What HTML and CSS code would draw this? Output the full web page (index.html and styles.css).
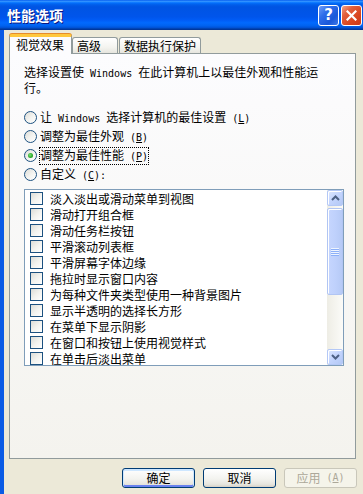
FILE: index.html
```html
<!DOCTYPE html>
<html lang="zh-CN">
<head>
<meta charset="utf-8">
<title>性能选项</title>
<link rel="stylesheet" href="styles.css">
</head>
<body>
<div class="window">
  <div class="titlebar">
    <span class="title">性能选项</span>
    <div class="caption-buttons">
      <span class="cap-btn help">?</span>
      <span class="cap-btn close">
        <svg width="11" height="11" viewBox="0 0 11 11"><path d="M1.5 1.5 L9.5 9.5 M9.5 1.5 L1.5 9.5" stroke="#fff" stroke-width="2.2" stroke-linecap="square"/></svg>
      </span>
    </div>
  </div>
  <div class="client">
    <div class="tabs">
      <div class="tab active">视觉效果</div>
      <div class="tab">高级</div>
      <div class="tab">数据执行保护</div>
    </div>
    <div class="panel">
      <p class="desc">选择设置使<span class="en"> Windows </span>在此计算机上以最佳外观和性能运行。</p>
      <div class="radios">
        <div class="radio-row"><span class="radio"></span><span class="label">让<span class="en"> Windows </span>选择计算机的最佳设置<span class="en"> (<u>L</u>)</span></span></div>
        <div class="radio-row"><span class="radio"></span><span class="label">调整为最佳外观<span class="en"> (<u>B</u>)</span></span></div>
        <div class="radio-row"><span class="radio checked"></span><span class="label focus">调整为最佳性能<span class="en"> (<u>P</u>)</span></span></div>
        <div class="radio-row"><span class="radio"></span><span class="label">自定义<span class="en"> (<u>C</u>):</span></span></div>
      </div>
      <div class="listbox">
        <ul class="items">
          <li><span class="check"></span>淡入淡出或滑动菜单到视图</li>
          <li><span class="check"></span>滑动打开组合框</li>
          <li><span class="check"></span>滑动任务栏按钮</li>
          <li><span class="check"></span>平滑滚动列表框</li>
          <li><span class="check"></span>平滑屏幕字体边缘</li>
          <li><span class="check"></span>拖拉时显示窗口内容</li>
          <li><span class="check"></span>为每种文件夹类型使用一种背景图片</li>
          <li><span class="check"></span>显示半透明的选择长方形</li>
          <li><span class="check"></span>在菜单下显示阴影</li>
          <li><span class="check"></span>在窗口和按钮上使用视觉样式</li>
          <li><span class="check"></span>在单击后淡出菜单</li>
        </ul>
        <div class="scrollbar">
          <span class="sb-btn">
            <svg width="9" height="6" viewBox="0 0 9 6"><path d="M1 5 L4.5 1.5 L8 5" fill="none" stroke="#4D6185" stroke-width="2"/></svg>
          </span>
          <span class="sb-thumb"><span class="grip"></span></span>
          <span class="sb-track"></span>
          <span class="sb-btn">
            <svg width="9" height="6" viewBox="0 0 9 6"><path d="M1 1 L4.5 4.5 L8 1" fill="none" stroke="#4D6185" stroke-width="2"/></svg>
          </span>
        </div>
      </div>
    </div>
    <div class="buttons">
      <span class="btn default">确定</span>
      <span class="btn">取消</span>
      <span class="btn disabled">应用<span class="en"> (<u>A</u>)</span></span>
    </div>
  </div>
</div>
</body>
</html>
```
FILE: styles.css
```css
html, body {
  margin: 0;
  padding: 0;
}
body {
  width: 363px;
  height: 494px;
  overflow: hidden;
  background: #ECE9D8;
  font-family: "Noto Sans CJK SC", "Noto Sans", sans-serif;
  font-size: 12px;
  color: #000;
}
.en {
  font-family: "DejaVu Sans Mono", "Liberation Mono", monospace;
  font-size: 10px;
  white-space: pre;
}
.window {
  width: 367px;
  height: 494px;
  display: flex;
  flex-direction: column;
}
.titlebar {
  flex: none;
  height: 30px;
  box-sizing: border-box;
  display: flex;
  align-items: center;
  padding: 0 5px 0 7px;
  background: linear-gradient(to bottom, #0058EE 0%, #3593FF 4%, #288EFF 6%, #127DFF 8%, #036FFC 10%, #0262EE 14%, #0057E5 20%, #0054E3 24%, #0055EB 56%, #005BF5 66%, #026AFE 76%, #0062EF 86%, #0052D6 92%, #0040AB 96%, #003092 100%);
}
.title {
  flex: 1;
  color: #fff;
  font-weight: bold;
  font-size: 14px;
  line-height: 16px;
  text-shadow: 1px 1px 0 #0A1883;
}
.caption-buttons {
  display: flex;
  gap: 2px;
}
.cap-btn {
  width: 21px;
  height: 21px;
  box-sizing: border-box;
  border: 1px solid #fff;
  border-radius: 3px;
  display: flex;
  align-items: center;
  justify-content: center;
}
.help {
  background: linear-gradient(135deg, #6F9DF7 0%, #2E6DEA 35%, #1A58D9 70%, #3E79E8 100%);
  color: #fff;
  font-family: "DejaVu Sans", sans-serif;
  font-weight: bold;
  font-size: 15px;
  line-height: 1;
}
.close {
  background: linear-gradient(135deg, #F1A38A 0%, #E2603D 30%, #D9461F 65%, #C9381A 100%);
}
.client {
  flex: 1;
  border-left: 4px solid #0A5BE5;
  padding-left: 5px;
  display: flex;
  flex-direction: column;
}
.tabs {
  display: flex;
  align-items: flex-end;
  height: 20px;
  margin-top: 4px;
  margin-bottom: -1px;
  position: relative;
  z-index: 1;
}
.tab {
  box-sizing: border-box;
  height: 16px;
  min-width: 46px;
  margin-bottom: 1px;
  padding: 1px 4px 0;
  line-height: 14px;
  border: 1px solid #919B9C;
  border-bottom: none;
  border-radius: 3px 3px 0 0;
  background: linear-gradient(#FFFFFF, #F4F4F0 60%, #E6E5DE);
  white-space: nowrap;
}
.tab + .tab {
  margin-left: 1px;
}
.tab.active {
  height: 20px;
  margin-bottom: 0;
  padding: 1px 7px 0 6px;
  border-top: 3px solid #FFC83C;
  box-shadow: 0 -1px 0 #E68B2C;
  background: #FCFCFE;
}
.tab.active + .tab {
  margin-left: 0;
}
.panel {
  box-sizing: border-box;
  width: 347px;
  height: 406px;
  border: 1px solid #919B9C;
  background: linear-gradient(#FCFCFE, #F4F3EE);
  padding: 11px 14px 0;
  display: flex;
  flex-direction: column;
}
.desc {
  margin: 0;
  width: 300px;
  line-height: 14px;
}
.radios {
  margin-top: 13px;
  display: flex;
  flex-direction: column;
}
.radio-row {
  height: 19px;
  display: flex;
  align-items: center;
  gap: 3px;
}
.radio {
  box-sizing: border-box;
  width: 13px;
  height: 13px;
  border: 1px solid #1C5180;
  border-radius: 50%;
  background: linear-gradient(135deg, #DCDCD7 0%, #F4F4F1 55%, #FFFFFF 100%);
  display: flex;
  align-items: center;
  justify-content: center;
}
.radio.checked::after {
  content: "";
  width: 5px;
  height: 5px;
  border-radius: 50%;
  background: radial-gradient(circle at 40% 40%, #7CE37A 0%, #2DAA2B 55%, #1A8A1A 100%);
}
.label {
  line-height: 14px;
  white-space: nowrap;
}
.label.focus {
  outline: 1px dotted #000;
  outline-offset: 0;
}
.listbox {
  margin-top: 5px;
  box-sizing: border-box;
  width: 320px;
  height: 177px;
  border: 1px solid #7F9DB9;
  background: #fff;
  display: flex;
}
.items {
  flex: 1;
  margin: 0;
  padding: 0 0 0 5px;
  list-style: none;
  overflow: hidden;
}
.items li {
  height: 16px;
  display: flex;
  align-items: center;
  gap: 7px;
  white-space: nowrap;
}
.check {
  flex: none;
  box-sizing: border-box;
  width: 13px;
  height: 13px;
  border: 1px solid #1C5180;
  background: linear-gradient(135deg, #DCDCD7 0%, #F2F2EE 50%, #FFFFFF 100%);
}
.scrollbar {
  width: 16px;
  flex: none;
  display: flex;
  flex-direction: column;
  background: linear-gradient(to right, #EEEDE5, #FBFBF8);
}
.sb-btn {
  box-sizing: border-box;
  width: 16px;
  height: 16px;
  flex: none;
  border: 1px solid #B4C8F6;
  border-radius: 2px;
  box-shadow: inset 1px 1px 0 #fff;
  background: linear-gradient(135deg, #DCE7FF 0%, #C3D4FD 50%, #B3C8F5 100%);
  display: flex;
  align-items: center;
  justify-content: center;
}
.sb-thumb {
  box-sizing: border-box;
  width: 16px;
  height: 87px;
  margin-top: 2px;
  flex: none;
  border: 1px solid #B1C5F3;
  border-radius: 2px;
  box-shadow: inset 1px 1px 0 #fff;
  background: linear-gradient(to right, #C6D6FE, #BFD1FC 50%, #B6CAF6);
  display: flex;
  align-items: center;
  justify-content: center;
}
.grip {
  width: 8px;
  height: 8px;
  background: repeating-linear-gradient(to bottom, #EEF4FE 0, #EEF4FE 1px, #8CB0F8 1px, #8CB0F8 2px);
}
.sb-track {
  flex: 1;
}
.buttons {
  width: 348px;
  margin-top: 9px;
  display: flex;
  justify-content: flex-end;
  gap: 8px;
}
.btn {
  box-sizing: border-box;
  width: 73px;
  height: 20px;
  border: 1px solid #003C74;
  border-radius: 3px;
  background: linear-gradient(#FFFFFF, #F3F3EF 55%, #E6E5DE 85%, #D6D0C5);
  display: flex;
  align-items: center;
  justify-content: center;
  line-height: 14px;
}
.btn.default {
  box-shadow: inset 0 1px 0 1px #CEE7FF, inset 0 -1px 0 1px #6982EE;
}
.btn.disabled {
  border-color: #C9C7BA;
  background: #F5F4EA;
  color: #ACA899;
}
```
